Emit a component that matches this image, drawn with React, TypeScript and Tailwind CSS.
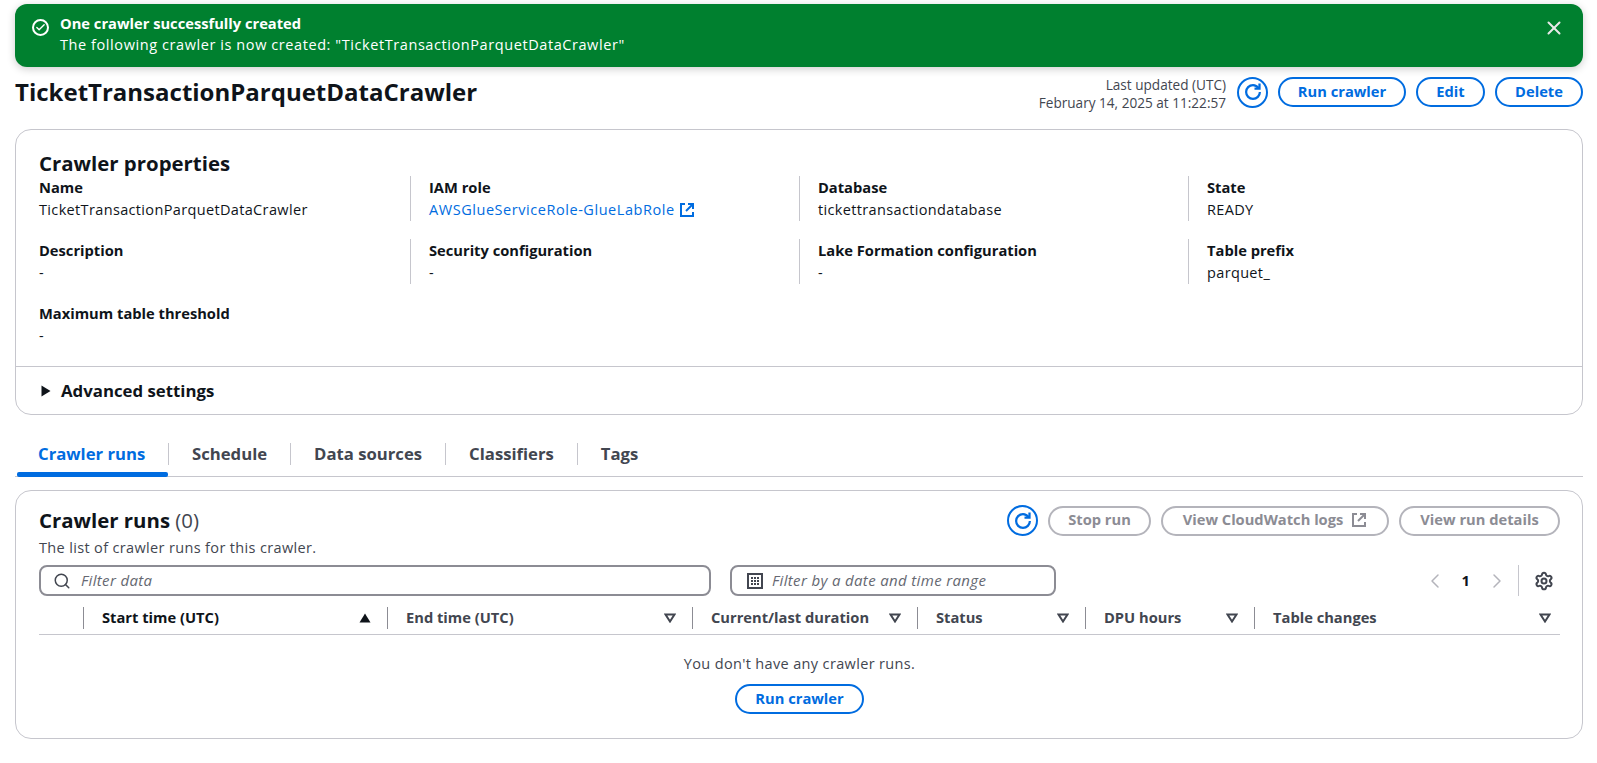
import { Check, X, Search, Settings, ChevronLeft, ChevronRight } from "lucide-react";

const blue = "text-[#006ce0]";
const body = "text-[14.5px] tracking-[0.35px]";
const label = "text-[14.7px] font-bold";

function RefreshButton() {
  return (
    <button className="w-[31px] h-[31px] rounded-full border-2 border-[#006ce0] flex items-center justify-center shrink-0">
      <svg width="20" height="20" viewBox="0 0 16 16" fill="none" stroke="#006ce0" strokeWidth="1.8">
        <path d="M13.5 8A5.5 5.5 0 1 1 8 2.5c1.9 0 3.4.9 4.5 2.5" />
        <path d="M13.2 1.2v4h-4" />
      </svg>
    </button>
  );
}

function ExternalIcon({ color = "#006ce0" }: { color?: string }) {
  return (
    <svg width="16" height="16" viewBox="0 0 16 16" fill="none" stroke={color} strokeWidth="2">
      <path d="M6 2H2v12h12v-4" />
      <path d="M9 2h5v5" />
      <path d="M14 2 7 9" />
    </svg>
  );
}

function PillButton({ children, width }: { children: React.ReactNode; width: string }) {
  return (
    <button className={`h-[30px] pb-[2px] rounded-full border-2 border-[#006ce0] ${blue} ${label} flex items-center justify-center ${width}`}>
      {children}
    </button>
  );
}

function DisabledButton({ children, width }: { children: React.ReactNode; width: string }) {
  return (
    <button className={`h-[30px] pb-[2px] rounded-full border-2 border-[#b4b4bb] text-[#8c8c94] ${label} flex items-center justify-center gap-2 ${width}`}>
      {children}
    </button>
  );
}

function Prop({ name, value, link, divider }: { name: string; value: string; link?: boolean; divider?: boolean }) {
  return (
    <div className={`h-[45px] ${divider ? "border-l border-[#c6c6cd] pl-[18px]" : ""}`}>
      <div className={`${label} leading-[22px] text-[#0f141a]`}>{name}</div>
      {link ? (
        <div className={`flex items-center gap-1 mt-[1px] text-[14.5px] tracking-[0.55px] leading-[22px] ${blue}`}>
          {value}
          <ExternalIcon />
        </div>
      ) : (
        <div className={`${body} mt-[1px] leading-[22px] text-[#0f141a]`}>{value}</div>
      )}
    </div>
  );
}

function Column({ name, width, sorted, last }: { name: string; width: string; sorted?: boolean; last?: boolean }) {
  return (
    <div className={`flex items-center h-[22px] pl-[18px] justify-between border-l border-[#8c8c94] ${last ? "pr-[9px]" : "pr-[16px]"} ${width}`}>
      <span className={`${label} ${sorted ? "text-[#0f141a]" : "text-[#424650]"}`}>{name}</span>
      <svg width="12" height="10" viewBox="0 0 12 10" className="shrink-0">
        {sorted ? (
          <path d="M6 0.5 11.5 9.5H0.5Z" fill="#0f141a" />
        ) : (
          <path d="M1.5 1.5h9L6 8.5Z" fill="none" stroke="#424650" strokeWidth="2" />
        )}
      </svg>
    </div>
  );
}

const tabs = ["Crawler runs", "Schedule", "Data sources", "Classifiers", "Tags"];

export default function App() {
  return (
    <div className="bg-white min-h-[763px] pl-[15px] pt-[4px] pr-[14px] font-['Open_Sans',sans-serif] text-[#0f141a]">
      {/* Flash */}
      <div className="h-[63px] rounded-[12px] bg-[#00802f] text-white flex pl-[17px] pr-[18px] shadow-[0_2px_8px_rgba(0,0,0,0.2)]">
        <div className="w-[17px] h-[17px] mt-[15px] rounded-full border-2 border-white flex items-center justify-center">
          <Check size={11} strokeWidth={3} />
        </div>
        <div className="ml-[11px] pt-[9px] flex-1 leading-[21px]">
          <div className={label}>One crawler successfully created</div>
          <div className="text-[14.5px] tracking-[0.58px]">The following crawler is now created: "TicketTransactionParquetDataCrawler"</div>
        </div>
        <X size={22} strokeWidth={2.2} className="mt-[13px] text-[#e8e8e8]" />
      </div>

      {/* Page header */}
      <div className="flex items-center justify-between mt-[10px] h-[30px]">
        <h1 className="font-bold text-[24px] leading-[30px]">TicketTransactionParquetDataCrawler</h1>
        <div className="flex items-center">
          <div className="text-right text-[13.6px] leading-[18px] text-[#424650] mr-[11px] pt-[4px]">
            <div>Last updated (UTC)</div>
            <div>February 14, 2025 at 11:22:57</div>
          </div>
          <RefreshButton />
          <div className="flex gap-[10px] ml-[10px]">
            <PillButton width="w-[128px]">Run crawler</PillButton>
            <PillButton width="w-[69px]">Edit</PillButton>
            <PillButton width="w-[88px]">Delete</PillButton>
          </div>
        </div>
      </div>

      {/* Properties */}
      <div className="mt-[22px] h-[286px] rounded-[16px] border border-[#c6c6cd] flex flex-col">
        <div className="flex-1 px-[23px] pt-[21px]">
          <h2 className="font-bold text-[20.4px] leading-[24px]">Crawler properties</h2>
          <div className="grid grid-cols-[371px_389px_389px_1fr] gap-y-[18px] mt-[1px]">
            <Prop name="Name" value="TicketTransactionParquetDataCrawler" />
            <Prop name="IAM role" value="AWSGlueServiceRole-GlueLabRole" link divider />
            <Prop name="Database" value="tickettransactiondatabase" divider />
            <Prop name="State" value="READY" divider />
            <Prop name="Description" value="-" />
            <Prop name="Security configuration" value="-" divider />
            <Prop name="Lake Formation configuration" value="-" divider />
            <Prop name="Table prefix" value="parquet_" divider />
            <Prop name="Maximum table threshold" value="-" />
          </div>
        </div>
        <div className="h-[48px] border-t border-[#c6c6cd] flex items-center pl-[25px]">
          <svg width="10" height="12" viewBox="0 0 10 12">
            <path d="M0.5 0.5 9.5 6 0.5 11.5Z" fill="#0f141a" />
          </svg>
          <span className="ml-[10px] font-bold text-[16.8px]">Advanced settings</span>
        </div>
      </div>

      {/* Tabs */}
      <div className="mt-[25px] h-[37px] border-b border-[#c6c6cd] flex items-start">
        {tabs.map((t, i) => (
          <div
            key={t}
            className={`h-[37px] flex flex-col ${i === 0 ? "ml-[2px] w-[151px]" : ""}`}
          >
            <div className={`h-[22px] mt-[3px] flex items-center text-[16.7px] font-bold ${i === 0 ? `${blue} pl-[21px]` : "text-[#424650] px-[23px] border-l border-[#c6c6cd]"}`}>
              {t}
            </div>
            {i === 0 && <div className="mt-[7px] h-[5px] rounded-[2px] bg-[#006ce0]" />}
          </div>
        ))}
      </div>

      {/* Runs */}
      <div className="mt-[13px] h-[249px] rounded-[16px] border border-[#c6c6cd] pl-[23px] pr-[22px] pt-[14px]">
        <div className="flex justify-between items-start">
          <div>
            <h2 className="font-bold text-[20.4px] leading-[30px]">
              Crawler runs <span className="font-normal text-[#424650]">(0)</span>
            </h2>
            <div className={`${body} leading-[18px] mt-[4px] text-[#424650]`}>The list of crawler runs for this crawler.</div>
          </div>
          <div className="flex items-center gap-[10px]">
            <RefreshButton />
            <DisabledButton width="w-[103px]">Stop run</DisabledButton>
            <DisabledButton width="w-[228px]">
              View CloudWatch logs <ExternalIcon color="#8c8c94" />
            </DisabledButton>
            <DisabledButton width="w-[161px]">View run details</DisabledButton>
          </div>
        </div>

        <div className="flex items-center mt-[8px] h-[31px]">
          <div className="w-[672px] h-[31px] rounded-[8px] border-2 border-[#8c8c94] flex items-center pl-[12px] text-[#424650]">
            <Search size={18} strokeWidth={2} />
            <span className="ml-[10px] italic text-[15px] tracking-[0.35px] text-[#656871]">Filter data</span>
          </div>
          <div className="ml-[19px] w-[326px] h-[31px] rounded-[8px] border-2 border-[#8c8c94] flex items-center pl-[15px]">
            <svg width="16" height="16" viewBox="0 0 16 16">
              <rect x="1" y="1" width="14" height="14" fill="none" stroke="#424650" strokeWidth="2" />
              <path d="M4 4h2v2H4zM7 4h2v2H7zM10 4h2v2h-2zM4 7h2v2H4zM7 7h2v2H7zM10 7h2v2h-2zM4 10h2v2H4zM7 10h2v2H7zM10 10h2v2h-2z" fill="#424650" />
            </svg>
            <span className="ml-[9px] italic text-[15px] tracking-[0.35px] text-[#656871]">Filter by a date and time range</span>
          </div>
          <div className="ml-auto flex items-center h-[31px]">
            <ChevronLeft size={24} strokeWidth={1.5} className="text-[#b4b4bb]" />
            <span className={`mx-[15px] ${label}`}>1</span>
            <ChevronRight size={24} strokeWidth={1.5} className="text-[#b4b4bb]" />
            <div className="h-[31px] border-l border-[#c6c6cd] ml-[9px] mr-[15px]" />
            <Settings size={20} strokeWidth={2.4} className="text-[#424650] mr-[6px]" />
          </div>
        </div>

        {/* Table head */}
        <div className="flex items-center h-[39px] pt-[5px] border-b border-[#c6c6cd]">
          <div className="w-[44px]" />
          <Column name="Start time (UTC)" width="w-[304px]" sorted />
          <Column name="End time (UTC)" width="w-[305px]" />
          <Column name="Current/last duration" width="w-[225px]" />
          <Column name="Status" width="w-[168px]" />
          <Column name="DPU hours" width="w-[169px]" />
          <Column name="Table changes" width="flex-1" last />
        </div>

        <div className="flex flex-col items-center">
          <div className={`${body} leading-[22px] mt-[18px] text-[#424650]`}>You don't have any crawler runs.</div>
          <div className="mt-[9px]">
            <PillButton width="w-[129px]">Run crawler</PillButton>
          </div>
        </div>
      </div>
    </div>
  );
}
